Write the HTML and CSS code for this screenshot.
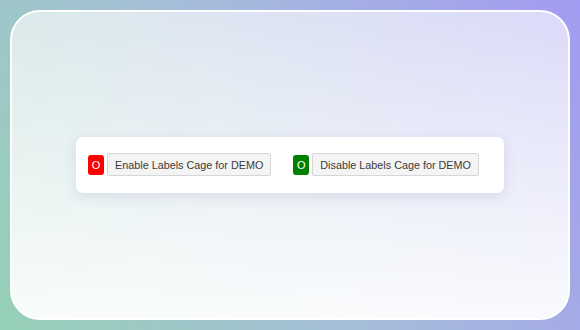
FILE: index.html
```html
<!DOCTYPE html>
<html lang="en">
<head>
    <meta charset="UTF-8">
    <meta name="viewport" content="width=device-width, initial-scale=1.0">
    <title>Labels Cage Demo</title>
    <link rel="stylesheet" href="styles.css">
</head>
<body>
    <div class="frame">
        <div class="panel">
            <div class="group">
                <span class="state state-off">O</span>
                <button class="toggle">Enable Labels Cage for DEMO</button>
            </div>
            <div class="group">
                <span class="state state-on">O</span>
                <button class="toggle">Disable Labels Cage for DEMO</button>
            </div>
        </div>
    </div>
</body>
</html>
```

FILE: styles.css
```css
html, body {
    margin: 0;
    padding: 0;
}
body {
    width: 580px;
    height: 330px;
    padding: 10px;
    box-sizing: border-box;
    background: linear-gradient(60deg, #95d0b6 0%, #a6bfd8 45%, #a29bf2 100%);
    font-family: 'Liberation Sans', Arial, sans-serif;
    overflow: hidden;
}
.frame {
    height: 100%;
    box-sizing: border-box;
    border: 2px solid #ffffff;
    border-radius: 30px;
    background: linear-gradient(to bottom, rgba(255, 255, 255, 0.62), rgba(255, 255, 255, 0.94));
    display: flex;
    align-items: center;
    justify-content: center;
}
.panel {
    display: flex;
    align-items: center;
    background: #ffffff;
    border-radius: 7px;
    padding: 16px 25px 17px 12px;
    box-shadow: 0 4px 14px rgba(60, 60, 120, 0.12);
}
.group {
    display: flex;
    align-items: center;
    gap: 3px;
}
.group + .group {
    margin-left: 22px;
}
.state {
    width: 16px;
    height: 20px;
    border-radius: 3px;
    color: #ffffff;
    font-size: 11px;
    line-height: 20px;
    text-align: center;
}
.state-off {
    background: #ff0000;
}
.state-on {
    background: #008000;
}
.toggle {
    height: 23px;
    padding: 0 7px;
    font-family: 'Liberation Sans', Arial, sans-serif;
    font-size: 10.8px;
    color: #3a3a3a;
    background: #f4f4f4;
    border: 1px solid #d6d6d6;
    border-radius: 2px;
}
```
